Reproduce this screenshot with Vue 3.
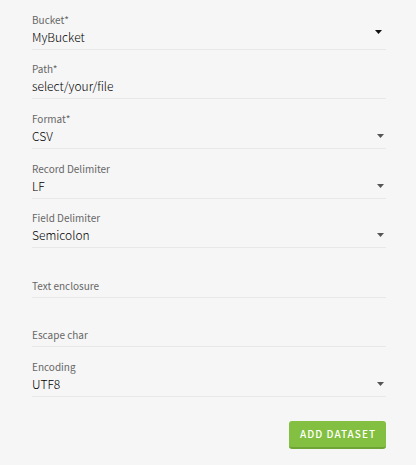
<script setup>
import { reactive } from 'vue'

const fields = reactive([
  { id: 'bucket', label: 'Bucket*', value: 'MyBucket', options: ['MyBucket'], primary: true },
  { id: 'path', label: 'Path*', value: 'select/your/file' },
  { id: 'format', label: 'Format*', value: 'CSV', options: ['CSV'] },
  { id: 'record-delimiter', label: 'Record Delimiter', value: 'LF', options: ['LF'] },
  { id: 'field-delimiter', label: 'Field Delimiter', value: 'Semicolon', options: ['Semicolon'] },
  { id: 'text-enclosure', label: 'Text enclosure', value: '' },
  { id: 'escape-char', label: 'Escape char', value: '' },
  { id: 'encoding', label: 'Encoding', value: 'UTF8', options: ['UTF8'] },
])
</script>

<template>
  <form class="dataset-form" @submit.prevent>
    <div class="fields">
      <div
        v-for="field in fields"
        :key="field.id"
        class="field"
        :class="{ empty: !field.value, primary: field.primary }"
      >
        <label :for="field.id">{{ field.label }}</label>
        <select v-if="field.options" :id="field.id" v-model="field.value" class="control">
          <option v-for="option in field.options" :key="option">{{ option }}</option>
        </select>
        <input v-else :id="field.id" v-model="field.value" class="control" type="text" />
        <svg v-if="field.options" class="arrow" width="7" height="4" viewBox="0 0 7 4" aria-hidden="true">
          <path d="M0 0h7L3.5 4z" fill="currentColor" />
        </svg>
      </div>
    </div>
    <div class="actions">
      <button type="submit">ADD DATASET</button>
    </div>
  </form>
</template>

<style>
body {
  background: #f6f6f6;
}
</style>

<style scoped>
.dataset-form {
  box-sizing: border-box;
  display: flex;
  flex-direction: column;
  min-height: 100vh;
  padding: 0 30px 16px 32px;
  background: #f6f6f6;
  font-family: "Noto Sans CJK SC", "Noto Sans", sans-serif;
}

.fields {
  flex: 1;
  display: grid;
  grid-auto-rows: 1fr;
}

.field {
  display: grid;
  grid-template-columns: 1fr auto;
  grid-template-rows: 16px 20px;
  align-content: end;
  align-items: center;
  padding-bottom: 2px;
  border-bottom: 1px solid #e8e8e8;
}

label {
  grid-area: 1 / 1;
  padding-top: 2px;
  color: #666;
  font-size: 10px;
  line-height: 16px;
}

.empty label {
  grid-area: 2 / 1;
}

.control {
  grid-area: 2 / 1 / 3 / 3;
  width: 100%;
  height: 20px;
  margin: 0;
  padding: 0;
  border: 0;
  outline: 0;
  appearance: none;
  background: transparent;
  color: #000;
  font-family: inherit;
  font-size: 12px;
  font-weight: 300;
  line-height: 20px;
}

.arrow {
  grid-area: 2 / 2;
  margin-right: 2px;
  color: #555;
  pointer-events: none;
}

.primary .arrow {
  align-self: start;
  margin: 3px 4px 0 0;
  color: #111;
}

.actions {
  display: flex;
  justify-content: flex-end;
  padding-top: 24px;
}

button {
  height: 28px;
  padding: 0 10px 0 11px;
  border: 0;
  border-bottom: 2px solid #6fa534;
  border-radius: 3px;
  background: #83bf40;
  color: #fff;
  font-family: inherit;
  font-size: 10px;
  font-weight: 500;
  line-height: 26px;
  letter-spacing: 1px;
}
</style>
